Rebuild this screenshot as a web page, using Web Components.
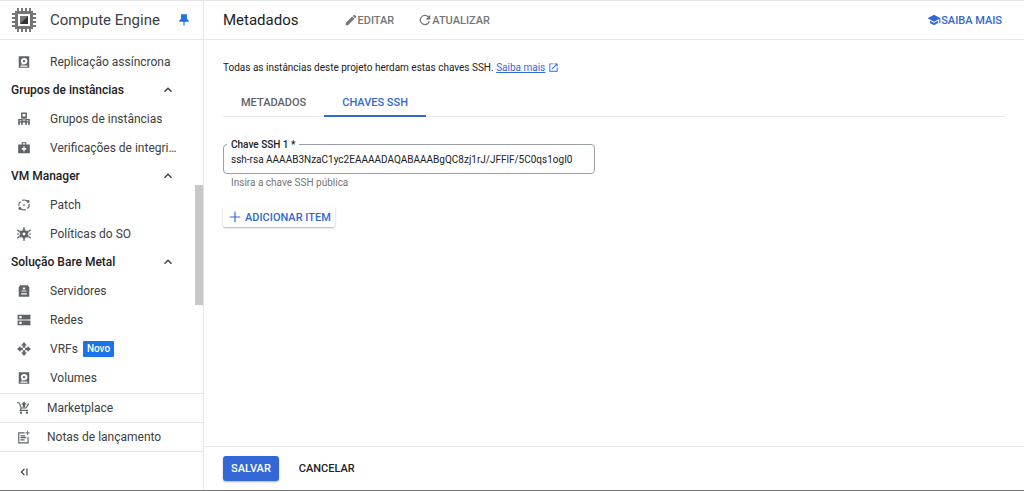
<!DOCTYPE html>
<html lang="pt-BR">
<head>
<meta charset="utf-8">
<meta name="viewport" content="width=device-width, initial-scale=1">
<title>Metadados - Compute Engine</title>
<style>
    body {
        margin: 0;
        font-family: Roboto, "Liberation Sans", sans-serif;
        font-size: 10px;
        color: #202124;
        background: #fff;
    }
</style>
</head>
<body>
<console-app></console-app>

<script>
const icons = {
    chip: `<g fill="#757575"><path d="M5 0h2v4H5zM9 0h2v4H9zM13 0h2v4h-2zM17 0h2v4h-2zM5 20h2v4H5zM9 20h2v4H9zM13 20h2v4h-2zM17 20h2v4h-2zM0 5h4v2H0zM0 9h4v2H0zM0 13h4v2H0zM0 17h4v2H0zM20 5h4v2h-4zM20 9h4v2h-4zM20 13h4v2h-4zM20 17h4v2h-4z"/><path fill-rule="evenodd" d="M3 3h18v18H3zM6 6v12h12V6z"/></g><path fill="#757575" d="M8 8h8v8H8z"/><path fill="#333" d="M16 8v8H8z"/>`,
    pin: `<path d="M17 2H7v8l-3 3v2h7v6l1 1 1-1v-6h7v-2l-3-3z"/>`,
    disk: `<path fill-rule="evenodd" d="M3 2h18v20H3zM12 5a5.500 5.500 0 0 0-4 9.300V17l3-1.200A5.500 5.500 0 1 0 12 5zM6 18v2h12v-2z"/><circle cx="12" cy="10.500" r="2"/>`,
    group: `<path fill-rule="evenodd" d="M7 1h10v10h-4v3h-2v-3H7zM9.500 3.500v4h5v-4z"/><path fill-rule="evenodd" d="M2 12h8v3h4v-3h8v10h-3v-4h-2v4h-3v-4h-4v4H7v-4H5v4H2zM4.500 14v2h3v-2zM16.500 14v2h3v-2z"/>`,
    health: `<path fill-rule="evenodd" d="M8 6V2h8v4h6v15H2V6zM10 6h4V4h-4zM11 9v3H8v3h3v3h2v-3h3v-3h-3V9z"/>`,
    patch: `<g fill="none" stroke="currentColor" stroke-width="2"><path d="M3 14a9 9 0 0 1 3-8M9 4a9 9 0 0 1 8 1M21 10a9 9 0 0 1-3 8M15 20a9 9 0 0 1-8-1"/><circle cx="12" cy="12" r="1.500" stroke-width="1"/></g><circle cx="19" cy="6" r="2.500"/><circle cx="5" cy="18" r="2.500"/>`,
    policy: `<path fill-rule="evenodd" d="M10 4h4l1 3 3-1 2 3-2 3 2 3-2 3-3-1-1 3h-4l-1-3-3 1-2-3 2-3-2-3 2-3 3 1zM12 9.500a2.500 2.500 0 1 0 0 5 2.500 2.500 0 0 0 0-5z"/><path d="M11 0h2v5h-2zM11 19h2v5h-2zM1 4l4 3-1 2-4-3zM23 4l-4 3 1 2 4-3zM0 11h4v2H0zM20 11h4v2h-4zM1 20l4-3-1-2-4 3zM23 20l-4-3 1-2 4 3z"/>`,
    server: `<path fill-rule="evenodd" d="M6 2h12l3 3v17H3V5zM10 6v3h4V6zM8 11v2h8v-2zM7 16v2h10v-2z"/>`,
    network: `<path fill-rule="evenodd" d="M1 3h22v8H1zM4 5v4h4V5zM1 13h22v8H1zM4 15v4h4v-4z"/>`,
    vrf: `<path d="M12 0l5 6h-3v4h-4V6H7zM12 24l5-6h-3v-4h-4v4H7zM0 12l6-5v3h4v4H6v3zM24 12l-6-5v3h-4v4h4v3z"/>`,
    cart: `<path d="M12 11l5-5h-3V1h-4v5H7z" transform="rotate(180 12 6)"/><path d="M7 18a2 2 0 1 0 0 4 2 2 0 0 0 0-4zM17 18a2 2 0 1 0 0 4 2 2 0 0 0 0-4zM7 15l1-2h8l5-8-2-1-4 7H8L4 2H0v2h3l3 8-2 5h15v-2z"/>`,
    notes: `<path d="M2 4h11v2H4v15h14v-9h2v11H2z"/><path d="M6 9h8v2H6zM6 12h10v2H6zM6 16h7v2H6zM18 0l1 4 4 1-4 1-1 4-1-4-4-1 4-1z"/>`,
    up: `<path d="M12 8l-6 6 1.400 1.400L12 10.800l4.600 4.600L18 14z"/>`,
    collapse: `<path d="M12 6l1.500 1.500L9 12l4.500 4.500L12 18l-6-6zM16 6h2v12h-2z"/>`,
    edit: `<path d="M3 17.250V21h3.750L17.810 9.940l-3.750-3.750zM20.710 7.040c.39-.39.39-1.020 0-1.410l-2.340-2.340c-.39-.39-1.020-.39-1.410 0l-1.830 1.830 3.750 3.750z"/>`,
    refresh: `<path d="M18.400 5.600A9 9 0 1 0 20.700 14h-2.400A6.700 6.700 0 1 1 12 5.300c1.800 0 3.500.8 4.700 1.900L13 11h8V3z"/>`,
    school: `<path d="M5 13.180v4L12 21l7-3.820v-4L12 17zM12 3L1 9l11 6 9-4.910V17h2V9z"/>`,
    external: `<path d="M19 19H5V5h7V3H3v18h18v-9h-2zM14 3v2h3.590l-9.830 9.830 1.410 1.410L19 6.410V10h2V3z"/>`,
    plus: `<path d="M21 13h-8v8h-2v-8H3v-2h8V3h2v8h8z"/>`
}

// small helper so that each element keeps only its own template
function define(name, html, setup) {
    const template = document.createElement("template")
    template.innerHTML = html

    customElements.define(name, class extends HTMLElement {
        constructor() {
            super()
            this.attachShadow({ mode: "open" })
            this.shadowRoot.append(template.content.cloneNode(true))
        }

        connectedCallback() {
            if (setup) setup(this, this.shadowRoot)
        }
    })
}

define("ui-icon", `
    <style>
        :host {
            display: inline-block;
            flex: none;
            width: var(--size, 14px);
            height: var(--size, 14px);
        }
        svg { display: block; width: 100%; height: 100%; fill: currentColor; }
    </style>
    <svg viewBox="0 0 24 24" aria-hidden="true"></svg>
`, (el, root) => {
    root.querySelector("svg").innerHTML = icons[el.getAttribute("name")]
})

define("nav-item", `
    <style>
        :host { display: block; }
        a {
            display: flex;
            align-items: center;
            height: 29px;
            padding: 0 25px 0 17px;
            color: #3c4043;
            font-size: 12px;
            text-decoration: none;
        }
        ui-icon { color: #5f6368; margin-right: var(--icon-gap, 19px); }
        .text {
            overflow: hidden;
            white-space: nowrap;
            text-overflow: ellipsis;
        }
    </style>
    <a href="#"><ui-icon></ui-icon><span class="text"><slot></slot></span><slot name="badge"></slot></a>
`, (el, root) => {
    const icon = root.querySelector("ui-icon")
    icon.setAttribute("name", el.getAttribute("icon"))
    icon.shadowRoot.querySelector("svg").innerHTML = icons[el.getAttribute("icon")]
})

define("nav-section", `
    <style>
        :host { display: block; }
        button {
            display: flex;
            align-items: center;
            justify-content: space-between;
            width: 100%;
            height: 28px;
            padding: 0 27px 0 11px;
            border: 0;
            background: none;
            font: 500 12px Roboto, sans-serif;
            color: #202124;
        }
        ui-icon { --size: 16px; color: #3c4043; }
    </style>
    <button type="button" aria-expanded="true"><span></span><ui-icon name="up"></ui-icon></button>
    <slot></slot>
`, (el, root) => {
    root.querySelector("span").textContent = el.getAttribute("heading")
})

define("side-nav", `
    <style>
        :host {
            display: flex;
            flex-direction: column;
            min-height: 0;
            border-right: 1px solid #e4e5e7;
        }
        header {
            display: flex;
            align-items: center;
            flex: none;
            height: 38px;
            padding: 0 12px;
            border-bottom: 1px solid #e8e8e8;
        }
        header ui-icon { --size: 24px; }
        h2 {
            flex: 1;
            margin: 0 0 0 14px;
            font-size: 15px;
            font-weight: 400;
            color: #3c4043;
        }
        header .pin { --size: 14px; color: #1a73e8; }
        nav {
            position: relative;
            flex: 1;
            min-height: 0;
            padding-top: 7px;
            overflow: hidden;
        }
        .thumb {
            position: absolute;
            top: 41%;
            right: 0;
            width: 8px;
            height: 34%;
            background: #c8c8c8;
        }
        .badge {
            margin-left: 5px;
            padding: 1px 4px;
            border-radius: 1px;
            background: #1a73e8;
            color: #fff;
            font-size: 10px;
            font-weight: 500;
            line-height: 14px;
        }
        .extra { --icon-gap: 16px; flex: none; border-top: 1px solid #e4e5e7; }
        .extra nav-item { margin-top: -1px; border-bottom: 1px solid #e4e5e7; }
        footer { flex: none; padding: 13px 17px 11px; }
        footer button {
            display: block;
            padding: 0;
            border: 0;
            background: none;
            color: #3c4043;
        }
        footer ui-icon { display: block; }
    </style>
    <header>
        <ui-icon name="chip"></ui-icon>
        <h2>Compute Engine</h2>
        <ui-icon class="pin" name="pin"></ui-icon>
    </header>
    <nav>
        <nav-item icon="disk">Replicação assíncrona</nav-item>
        <nav-section heading="Grupos de instâncias">
            <nav-item icon="group">Grupos de instâncias</nav-item>
            <nav-item icon="health">Verificações de integridade</nav-item>
        </nav-section>
        <nav-section heading="VM Manager">
            <nav-item icon="patch">Patch</nav-item>
            <nav-item icon="policy">Políticas do SO</nav-item>
        </nav-section>
        <nav-section heading="Solução Bare Metal">
            <nav-item icon="server">Servidores</nav-item>
            <nav-item icon="network">Redes</nav-item>
            <nav-item icon="vrf">VRFs<span class="badge" slot="badge">Novo</span></nav-item>
            <nav-item icon="disk">Volumes</nav-item>
        </nav-section>
        <div class="thumb"></div>
    </nav>
    <div class="extra">
        <nav-item icon="cart">Marketplace</nav-item>
        <nav-item icon="notes">Notas de lançamento</nav-item>
    </div>
    <footer><button type="button" aria-label="Recolher menu"><ui-icon name="collapse"></ui-icon></button></footer>
`)

define("page-header", `
    <style>
        :host {
            display: flex;
            align-items: center;
            height: 38px;
            padding: 0 22px 0 19px;
            border-bottom: 1px solid #e8e8e8;
        }
        h1 { margin: 0 45px 0 0; font-size: 15px; font-weight: 400; color: #202124; }
        .actions { display: flex; flex: 1; gap: 24px; }
        button, a {
            display: flex;
            align-items: center;
            padding: 0;
            border: 0;
            background: none;
            font: 500 11px Roboto, sans-serif;
            color: #757575;
            text-decoration: none;
        }
        a { color: #3367d6; }
    </style>
    <h1>Metadados</h1>
    <div class="actions">
        <button type="button"><ui-icon name="edit"></ui-icon>EDITAR</button>
        <button type="button"><ui-icon name="refresh"></ui-icon>ATUALIZAR</button>
    </div>
    <a href="#"><ui-icon name="school"></ui-icon>SAIBA MAIS</a>
`)

define("tab-bar", `
    <style>
        :host { display: flex; border-bottom: 1px solid #e8e8e8; }
        ::slotted(button) {
            height: 30px;
            margin-bottom: -1px;
            padding: 2px 18px 0;
            border: 0;
            border-bottom: 2px solid transparent;
            background: none;
            font: 500 11px Roboto, sans-serif;
            color: #5f6368;
        }
        ::slotted([aria-selected="true"]) { color: #3367d6; border-bottom-color: #3367d6; }
    </style>
    <slot></slot>
`, el => el.setAttribute("role", "tablist"))

define("text-field", `
    <style>
        :host { display: block; position: relative; max-width: 372px; }
        label {
            position: absolute;
            top: -6px;
            left: 4px;
            padding: 0 4px;
            background: #fff;
            font-size: 10px;
            font-weight: 500;
            line-height: 14px;
        }
        input {
            display: block;
            box-sizing: border-box;
            width: 100%;
            height: 30px;
            padding: 0 7px;
            border: 1px solid #9aa0a6;
            border-radius: 4px;
            font: 10px Roboto, sans-serif;
            color: #202124;
        }
        p { margin: 2px 8px 0; font-size: 10px; line-height: 14px; color: #757575; }
    </style>
    <label for="field"></label>
    <input id="field" type="text" aria-describedby="hint">
    <p id="hint"><slot></slot></p>
`, (el, root) => {
    root.querySelector("label").textContent = el.getAttribute("label")
    root.querySelector("input").value = el.getAttribute("value")
})

define("ui-button", `
    <style>
        :host { display: inline-block; }
        button {
            display: flex;
            align-items: center;
            gap: 3px;
            height: 25px;
            padding: 0 8px;
            border: 0;
            border-radius: 3px;
            background: none;
            font: 500 11px Roboto, sans-serif;
            color: #202124;
        }
        :host([kind="primary"]) button {
            background: #3367d6;
            color: #fff;
            box-shadow: 0 1px 2px rgba(0, 0, 0, .3);
        }
        :host([kind="raised"]) button {
            height: 20px;
            padding: 0 4px 0 5px;
            border-radius: 2px;
            color: #3367d6;
            box-shadow: 0 1px 2px rgba(0, 0, 0, .3);
        }
    </style>
    <button type="button"><slot></slot></button>
`)

define("console-app", `
    <style>
        :host {
            display: grid;
            grid-template-columns: 204px 1fr;
            box-sizing: border-box;
            height: 100vh;
            border-top: 1px solid #e4e5e7;
            border-bottom: 1px solid #757575;
        }
        main { display: flex; flex-direction: column; min-width: 0; min-height: 0; }
        .content { flex: 1; padding: 20px 19px; }
        .intro { margin: 0 0 12px; line-height: 15px; color: #202124; }
        .intro a { color: #3367d6; }
        .intro ui-icon { --size: 11px; vertical-align: -2px; color: #3367d6; }
        text-field { margin: 27px 0 17px; }
        footer {
            display: flex;
            gap: 12px;
            padding: 9px 19px;
            border-top: 1px solid #e8e8e8;
        }
    </style>
    <side-nav></side-nav>
    <main>
        <page-header></page-header>
        <div class="content">
            <p class="intro">Todas as instâncias deste projeto herdam estas chaves SSH. <a href="#">Saiba mais</a> <ui-icon name="external"></ui-icon></p>
            <tab-bar>
                <button type="button" role="tab" aria-selected="false">METADADOS</button>
                <button type="button" role="tab" aria-selected="true">CHAVES SSH</button>
            </tab-bar>
            <text-field label="Chave SSH 1 *" value="ssh-rsa AAAAB3NzaC1yc2EAAAADAQABAAABgQC8zj1rJ/JFFlF/5C0qs1ogI0">Insira a chave SSH pública</text-field>
            <ui-button kind="raised"><ui-icon name="plus"></ui-icon>ADICIONAR ITEM</ui-button>
        </div>
        <footer>
            <ui-button kind="primary">SALVAR</ui-button>
            <ui-button>CANCELAR</ui-button>
        </footer>
    </main>
`)
</script>
</body>
</html>
